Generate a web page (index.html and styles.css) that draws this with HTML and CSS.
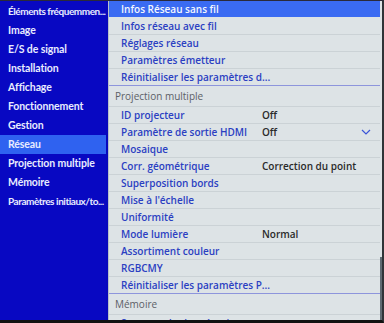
FILE: index.html
```html
<!DOCTYPE html>
<html lang="fr">
<head>
    <meta charset="UTF-8">
    <title>Réseau</title>
    <link rel="stylesheet" href="styles.css">
</head>
<body>
    <div class="screen">
        <ul class="nav">
            <li class="fit">Éléments fréquemmen...</li>
            <li>Image</li>
            <li>E/S de signal</li>
            <li>Installation</li>
            <li>Affichage</li>
            <li>Fonctionnement</li>
            <li>Gestion</li>
            <li class="cur">Réseau</li>
            <li>Projection multiple</li>
            <li>Mémoire</li>
            <li class="fit">Paramètres initiaux/to...</li>
        </ul>
        <div class="panel">
            <ul class="list">
                <li class="row cur"><span class="name">Infos Réseau sans fil</span></li>
                <li class="row"><span class="name">Infos réseau avec fil</span></li>
                <li class="row"><span class="name">Réglages réseau</span></li>
                <li class="row"><span class="name">Paramètres émetteur</span></li>
                <li class="row last"><span class="name">Réinitialiser les paramètres d...</span></li>
                <li class="head">Projection multiple</li>
                <li class="row"><span class="name">ID projecteur</span><span class="val">Off</span></li>
                <li class="row"><span class="name">Paramètre de sortie HDMI</span><span class="val">Off</span>
                    <svg class="chev" width="10" height="6" viewBox="0 0 10 6"><path d="M1 1 L5 5 L9 1" fill="none" stroke="#3b55d8" stroke-width="1.2"/></svg>
                </li>
                <li class="row"><span class="name">Mosaique</span></li>
                <li class="row"><span class="name">Corr. géométrique</span><span class="val">Correction du point</span></li>
                <li class="row"><span class="name">Superposition bords</span></li>
                <li class="row"><span class="name">Mise à l'échelle</span></li>
                <li class="row"><span class="name">Uniformité</span></li>
                <li class="row"><span class="name">Mode lumière</span><span class="val">Normal</span></li>
                <li class="row"><span class="name">Assortiment couleur</span></li>
                <li class="row"><span class="name">RGBCMY</span></li>
                <li class="row last"><span class="name">Réinitialiser les paramètres P...</span></li>
                <li class="head">Mémoire</li>
                <li class="row"><span class="name">Sauvegarder la mémoire</span></li>
            </ul>
            <div class="thumb"></div>
        </div>
    </div>
</body>
</html>
```

FILE: styles.css
```css
*{
    margin: 0;
    padding: 0;
    list-style: none;
    box-sizing: border-box;
}
body{
    background: #111;
    font-family: "Open Sans", "Noto Sans", sans-serif;
    font-size: 10px;
    font-weight: 600;
}
.screen{
    width: 384px;
    height: 323px;
    display: flex;
    border-top: 1px solid #2a2a3a;
    border-right: 2px solid #303438;
    border-bottom: 3px solid #111;
    overflow: hidden;
    background: #0808bc;
}
.nav{
    width: 106px;
    padding-top: 1px;
    background: #0808c2;
    color: #e8ecff;
    font-family: Lato, "Open Sans", sans-serif;
    font-size: 10.5px;
    font-weight: 700;
    letter-spacing: -0.1px;
}
.nav li{
    height: 19px;
    line-height: 19px;
    padding-left: 8px;
    white-space: nowrap;
    overflow: hidden;
}
.nav li.fit{
    font-size: 10px;
    letter-spacing: -0.45px;
}
.nav li.cur{
    background: #2f62f0;
}
.panel{
    flex: 1;
    position: relative;
    margin-left: 2px;
    background: #dde3e6;
    border-left: 1px solid #b8c0c8;
}
.list{
    padding-right: 2px;
}
.row{
    height: 17px;
    display: flex;
    align-items: center;
    padding-left: 12px;
    border-bottom: 1px solid #cbd2d6;
    color: #2b3fc2;
    white-space: nowrap;
}
.row.cur{
    background: #3a6bf2;
    color: #f4f7ff;
    border-bottom-color: #dde3e6;
}
.row.last{
    border-bottom: 1px solid #8d95dc;
}
.row .name{
    width: 141px;
}
.row .val{
    color: #2a2a2a;
}
.row .chev{
    margin-left: auto;
    margin-right: 9px;
}
.head{
    height: 21px;
    line-height: 21px;
    padding-left: 6px;
    color: #5c6066;
    font-weight: 500;
    border-bottom: 1px solid #cbd2d6;
}
.thumb{
    position: absolute;
    right: 0;
    top: 256px;
    width: 2px;
    height: 70px;
    background: #5f6a72;
}
```
